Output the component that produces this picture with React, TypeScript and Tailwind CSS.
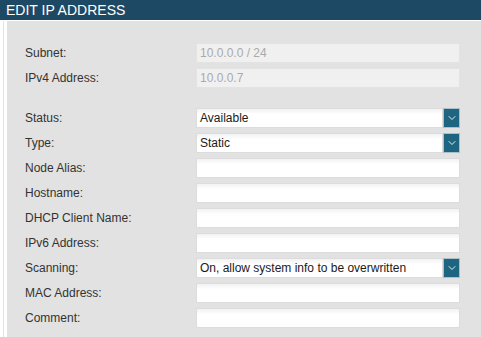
import { ChevronDown } from 'lucide-react';

type Row = {
  label: string;
  value?: string;
  kind: 'disabled' | 'text' | 'select';
};

const topRows: Row[] = [
  { label: 'Subnet:', value: '10.0.0.0 / 24', kind: 'disabled' },
  { label: 'IPv4 Address:', value: '10.0.0.7', kind: 'disabled' },
];

const rows: Row[] = [
  { label: 'Status:', value: 'Available', kind: 'select' },
  { label: 'Type:', value: 'Static', kind: 'select' },
  { label: 'Node Alias:', kind: 'text' },
  { label: 'Hostname:', kind: 'text' },
  { label: 'DHCP Client Name:', kind: 'text' },
  { label: 'IPv6 Address:', kind: 'text' },
  { label: 'Scanning:', value: 'On, allow system info to be overwritten', kind: 'select' },
  { label: 'MAC Address:', kind: 'text' },
  { label: 'Comment:', kind: 'text' },
];

function Field({ row }: { row: Row }) {
  if (row.kind === 'disabled') {
    return (
      <div className="w-[264px] h-[20px] border border-[#e3e3e3] bg-[#f0f0f0] text-[#aaaaaa] pl-[3px] leading-[18px]">
        {row.value}
      </div>
    );
  }
  if (row.kind === 'select') {
    return (
      <div className="w-[264px] h-[20px] flex">
        <div className="flex-1 border border-[#dcdcdc] bg-gradient-to-b from-[#f2f2f2] to-white to-[30%] text-[#1a1a1a] pl-[3px] leading-[18px] truncate">
          {row.value}
        </div>
        <div className="w-[17px] h-[20px] bg-[#1d6580] border border-[#aebec6] flex items-center justify-center text-white">
          <ChevronDown className="w-[12px] h-[12px]" strokeWidth={1.75} />
        </div>
      </div>
    );
  }
  return (
    <div className="w-[264px] h-[20px] border border-[#dcdcdc] bg-gradient-to-b from-[#f2f2f2] to-white to-[30%]" />
  );
}

function FormRow({ row }: { row: Row }) {
  return (
    <div className="flex items-center h-[20px]">
      <div className="w-[171px] text-[#333333]">{row.label}</div>
      <Field row={row} />
    </div>
  );
}

export default function App() {
  return (
    <div
      className="w-[481px] h-[337px] bg-white overflow-hidden flex flex-col text-[12px]"
      style={{ fontFamily: '"Liberation Sans", Arial, sans-serif' }}
    >
      {/* Header */}
      <div className="h-[20px] bg-[#1e4964] text-white text-[14px] leading-[20px] pl-[6px] shrink-0">
        EDIT IP ADDRESS
      </div>

      <div className="flex-1 flex pt-[1px]">
        {/* Left strip */}
        <div className="w-[7px] flex shrink-0">
          <div className="w-[3px]" />
          <div className="w-[1px] bg-[#e4e4e4]" />
        </div>

        {/* Panel */}
        <div className="flex-1 bg-[#e1e2e1] pl-[18px] pt-[22px]">
          <div className="flex flex-col gap-[5px]">
            {topRows.map(r => (
              <FormRow key={r.label} row={r} />
            ))}
          </div>
          <div className="flex flex-col gap-[5px] mt-[20px]">
            {rows.map(r => (
              <FormRow key={r.label} row={r} />
            ))}
          </div>
        </div>
      </div>
    </div>
  );
}
